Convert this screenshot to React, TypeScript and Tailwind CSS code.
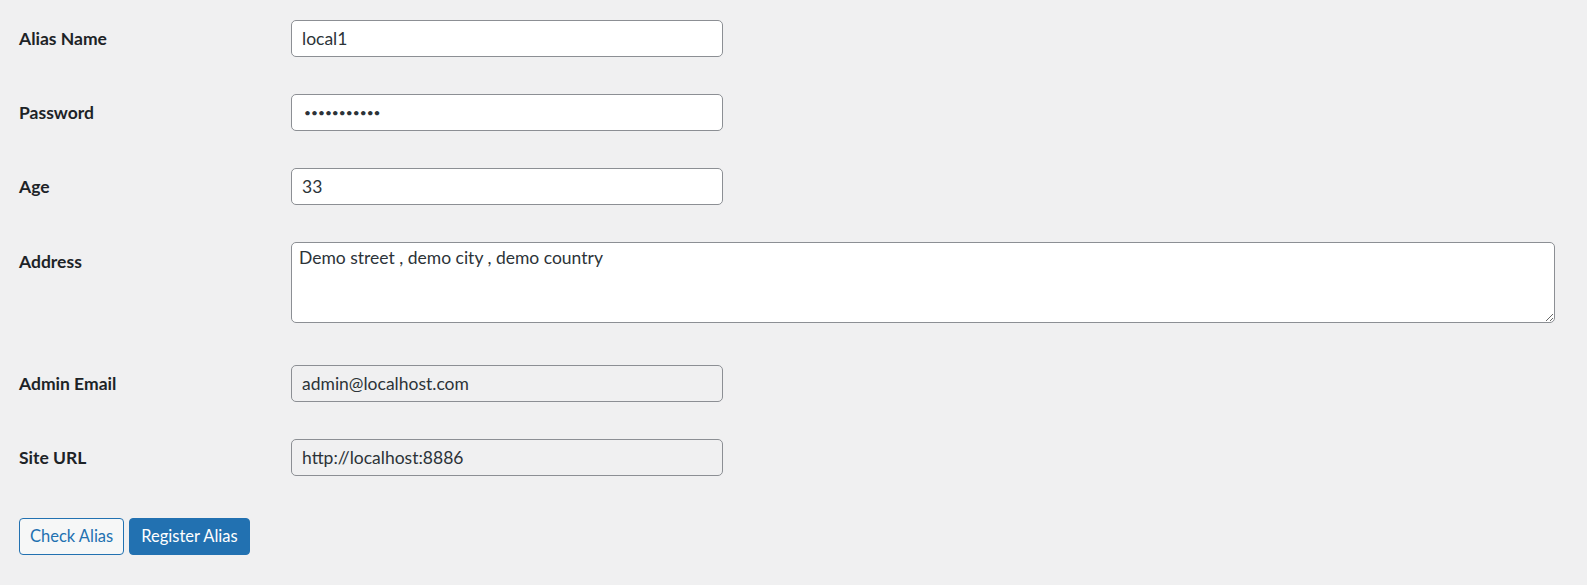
import { useState } from "react";

const font = { fontFamily: "Lato, 'Noto Sans', sans-serif" };

export default function App() {
  const [alias, setAlias] = useState("local1");
  const [pass, setPass] = useState("demopasswd1");
  const [age, setAge] = useState("33");
  const [addr, setAddr] = useState("Demo street , demo city , demo country");

  const boxCls = "w-[432px] h-[37px] rounded-[5px] text-[#2c3338] border border-[#8c8f94] outline-none";
  const inputCls = `${boxCls} px-[10px] bg-white text-[17.5px]`;
  const passCls = `${boxCls} px-[12px] bg-white text-[12px]`;
  const roCls = `${boxCls} px-[10px] bg-[#f0f0f1] text-[17.5px]`;
  const labelCls = "pt-[7px] text-[17.5px] leading-[23px] font-bold text-[#1d2327]";

  return (
    <div className="min-h-screen bg-[#f0f0f1] pl-[19px] pt-[1.5px]" style={font}>
      <div className="grid grid-cols-[272px_1fr] pr-[32px]">
        <div className="py-[18.5px]"><div className={labelCls}>Alias Name</div></div>
        <div className="py-[18.5px]">
          <input className={inputCls} value={alias} onChange={e=>setAlias(e.target.value)} />
        </div>

        <div className="py-[18.5px]"><div className={labelCls}>Password</div></div>
        <div className="py-[18.5px]">
          <input type="password" className={passCls} value={pass} onChange={e=>setPass(e.target.value)} />
        </div>

        <div className="py-[18.5px]"><div className={labelCls}>Age</div></div>
        <div className="py-[18.5px]">
          <input className={inputCls} value={age} onChange={e=>setAge(e.target.value)} />
        </div>

        <div className="py-[18.5px]"><div className="pt-[8px] text-[17.5px] leading-[23px] font-bold text-[#1d2327]">Address</div></div>
        <div className="pt-[18.5px] pb-[23.5px]">
          <textarea
            className="block w-full h-[81px] px-[7px] py-[3px] rounded-[5px] bg-white text-[#2c3338] border border-[#8c8f94] text-[17.5px] leading-[23px] outline-none"
            value={addr}
            onChange={e=>setAddr(e.target.value)}
          />
        </div>

        <div className="py-[18.5px]"><div className={labelCls}>Admin Email</div></div>
        <div className="py-[18.5px]">
          <input className={roCls} value="admin@localhost.com" readOnly />
        </div>

        <div className="py-[18.5px]"><div className={labelCls}>Site URL</div></div>
        <div className="py-[18.5px]">
          <input className={roCls} value="http://localhost:8886" readOnly />
        </div>
      </div>

      <div className="flex gap-[5px] mt-[23.5px]">
        <button className="h-[37px] px-[10px] rounded-[4px] border border-[#2271b1] bg-[#f6f7f7] text-[#2271b1] text-[16.5px]">
          Check Alias
        </button>
        <button className="h-[37px] px-[11px] rounded-[4px] border border-[#2271b1] bg-[#2271b1] text-white text-[16.5px]">
          Register Alias
        </button>
      </div>
    </div>
  );
}
